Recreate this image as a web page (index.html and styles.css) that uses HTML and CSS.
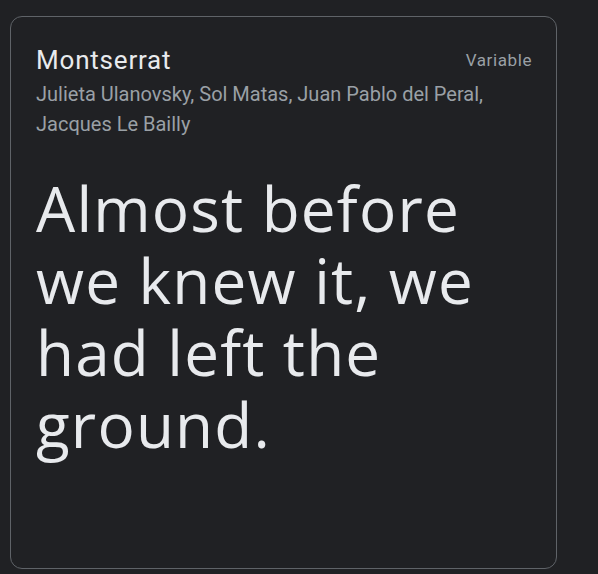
FILE: index.html
```html
<!DOCTYPE html>
<html>
<head>
<meta charset="utf-8">
<link rel="stylesheet" href="styles.css">
</head>
<body>
<div class="card">
  <div class="head">
    <div class="title">Montserrat</div>
    <div class="tag">Variable</div>
  </div>
  <div class="authors">Julieta Ulanovsky, Sol Matas, Juan Pablo del Peral, Jacques Le Bailly</div>
  <div class="sample">Almost before we knew it, we had left the ground.</div>
</div>
</body>
</html>
```
FILE: styles.css
```css
html, body {
  margin: 0;
  padding: 0;
  background: #202124;
}
body {
  padding: 16px 0 0 10px;
  font-family: Roboto, "Noto Sans", sans-serif;
}
.card {
  box-sizing: border-box;
  width: 547px;
  height: 553px;
  border: 1px solid #5f6368;
  border-radius: 12px;
  padding: 27px 24px 0 25px;
}
.head {
  display: flex;
  justify-content: space-between;
  align-items: flex-start;
}
.title {
  color: #e8eaed;
  font-size: 26px;
  line-height: 32px;
  letter-spacing: 0.8px;
}
.authors {
  margin-top: 3px;
  color: #9aa0a6;
  font-size: 20px;
  line-height: 30px;
}
.tag {
  color: #9aa0a6;
  font-size: 17px;
  line-height: 32px;
  letter-spacing: 0.6px;
}
.sample {
  margin-top: 33px;
  color: #e8eaed;
  font-family: "Open Sans", sans-serif;
  font-size: 62px;
  line-height: 72px;
  letter-spacing: 1.2px;
  width: 470px;
}
```
